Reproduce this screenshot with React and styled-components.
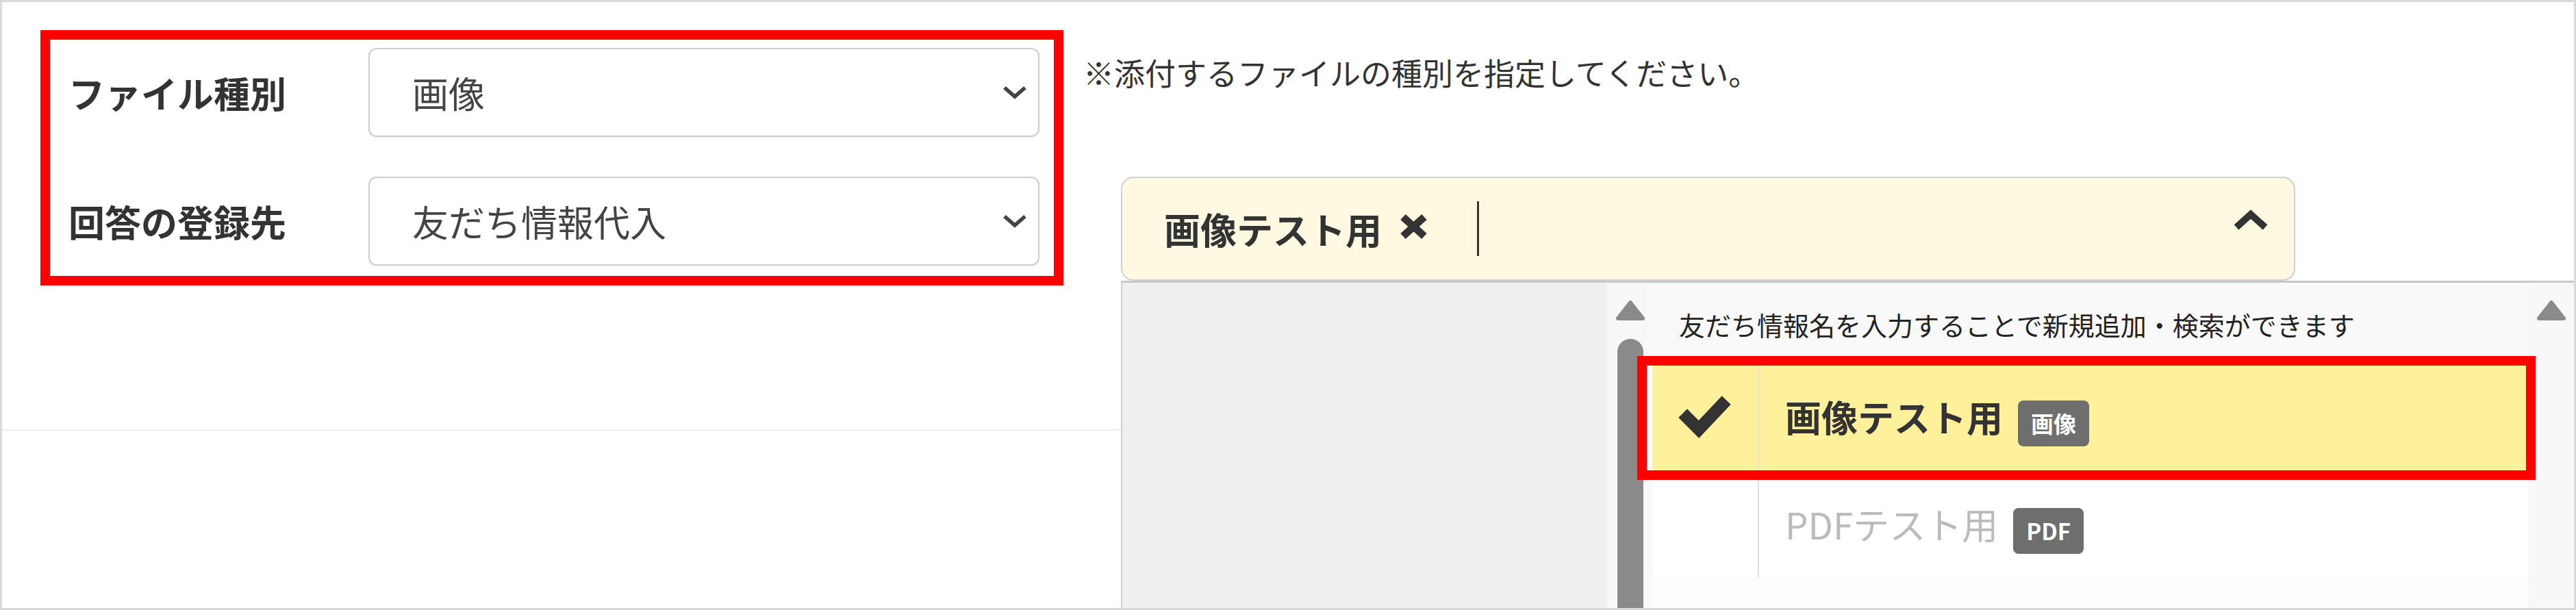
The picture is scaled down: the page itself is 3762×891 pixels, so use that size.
import styled, { createGlobalStyle } from "styled-components";

const GlobalStyle = createGlobalStyle`
  html, body {
    margin: 0;
    padding: 0;
    background: #fff;
  }
  body {
    font-family: "Noto Sans CJK JP", "Noto Sans", sans-serif;
    color: #333;
  }
  * {
    box-sizing: border-box;
  }
`;

const ChevronDown = () => (
    <svg width="36" height="20" viewBox="0 0 36 20">
        <polyline points="3,3 18,16 33,3" fill="none" stroke="#444" strokeWidth="5.5" />
    </svg>
);

const ChevronUp = () => (
    <svg width="52" height="34" viewBox="0 0 52 34">
        <polyline points="5,28 26,9 47,28" fill="none" stroke="#333" strokeWidth="10" />
    </svg>
);

const Cross = () => (
    <svg width="45" height="40" viewBox="0 0 45 40">
        <g stroke="#333" strokeWidth="11">
            <line x1="7" y1="6" x2="38" y2="34" />
            <line x1="38" y1="6" x2="7" y2="34" />
        </g>
    </svg>
);

const Check = () => (
    <svg width="78" height="63" viewBox="0 0 78 63">
        <polyline
            points="13,33 30,50 64,14"
            fill="none"
            stroke="#333"
            strokeWidth="18"
            strokeLinecap="square"
        />
    </svg>
);

const ArrowUp = () => (
    <svg width="44" height="33" viewBox="0 0 44 33">
        <path
            d="M22 5 L40 28 L4 28 Z"
            fill="#8a8a8a"
            stroke="#8a8a8a"
            strokeWidth="6"
            strokeLinejoin="round"
        />
    </svg>
);

const App = () => {
    return (
        <>
            <GlobalStyle />
            <Frame>
                <TopSection>
                    <MarkBox>
                        <FieldRow>
                            <FieldLabel>ファイル種別</FieldLabel>
                            <SelectBox>
                                <span>画像</span>
                                <ChevronDown />
                            </SelectBox>
                        </FieldRow>
                        <FieldRow>
                            <FieldLabel>回答の登録先</FieldLabel>
                            <SelectBox>
                                <span>友だち情報代入</span>
                                <ChevronDown />
                            </SelectBox>
                        </FieldRow>
                    </MarkBox>
                    <Side>
                        <Note>※添付するファイルの種別を指定してください。</Note>
                        <TagSelect>
                            <TagLabel>画像テスト用</TagLabel>
                            <RemoveButton>
                                <Cross />
                            </RemoveButton>
                            <Caret />
                            <Toggle>
                                <ChevronUp />
                            </Toggle>
                            <Dropdown>
                                <LeftPane />
                                <ScrollTrack $width={58} $pad={10} $bg="#f8f8f8">
                                    <ArrowUp />
                                    <Thumb />
                                </ScrollTrack>
                                <Content>
                                    <HelpText>
                                        友だち情報名を入力することで新規追加・検索ができます
                                    </HelpText>
                                    <OptionList>
                                        <OptionRow $selected>
                                            <CheckCell>
                                                <Check />
                                            </CheckCell>
                                            <NameCell $selected>
                                                画像テスト用
                                                <Badge>画像</Badge>
                                            </NameCell>
                                        </OptionRow>
                                        <OptionRow>
                                            <CheckCell />
                                            <NameCell>
                                                PDFテスト用
                                                <Badge>PDF</Badge>
                                            </NameCell>
                                        </OptionRow>
                                    </OptionList>
                                </Content>
                                <ScrollTrack $width={67} $pad={0} $bg="#f8f8f8">
                                    <ArrowUp />
                                </ScrollTrack>
                            </Dropdown>
                        </TagSelect>
                    </Side>
                </TopSection>
            </Frame>
        </>
    );
};

const Frame = styled.div`
    position: relative;
    width: 3762px;
    height: 891px;
    border: 3px solid #d9d9d9;
    overflow: hidden;
    background: #fff;
`;

const TopSection = styled.div`
    display: flex;
    align-items: flex-start;
    height: 626px;
    border-bottom: 2px solid #ececec;
`;

const MarkBox = styled.div`
    display: flex;
    flex-direction: column;
    row-gap: 58px;
    margin: 41px 0 0 56px;
    padding: 12px 21px 15px 27px;
    border: 14px solid #ff0000;
`;

const FieldRow = styled.div`
    display: flex;
    align-items: center;
`;

const FieldLabel = styled.div`
    flex: 0 0 438px;
    font-size: 53px;
    font-weight: 700;
    color: #333;
    white-space: nowrap;
`;

const SelectBox = styled.div`
    display: flex;
    align-items: center;
    justify-content: space-between;
    width: 980px;
    height: 130px;
    padding: 0 16px 0 62px;
    border: 2px solid #cfcfcf;
    border-radius: 12px;
    background: #fff;
    box-shadow: 0 1px 2px rgba(0, 0, 0, 0.08);
    font-size: 53px;
    color: #444;
    white-space: nowrap;
`;

const Side = styled.div`
    display: flex;
    flex-direction: column;
    flex: 1;
    padding: 76px 0 0 29px;
`;

const Note = styled.div`
    font-size: 45px;
    line-height: 54px;
    color: #333;
    white-space: nowrap;
`;

const TagSelect = styled.div`
    position: relative;
    display: flex;
    align-items: center;
    width: 1715px;
    height: 152px;
    margin: 125px 0 0 55px;
    padding: 0 37px 0 61px;
    border: 2px solid #d0d0d0;
    border-radius: 18px;
    background: #fff9e1;
`;

const TagLabel = styled.span`
    font-size: 53px;
    font-weight: 700;
    color: #333;
    white-space: nowrap;
`;

const RemoveButton = styled.span`
    display: flex;
    margin: 0 0 6px 24px;
`;

const Caret = styled.span`
    width: 3px;
    height: 80px;
    margin-left: 70px;
    background: #333;
`;

const Toggle = styled.span`
    display: flex;
    margin: 0 0 26px auto;
`;

const Dropdown = styled.div`
    position: absolute;
    top: calc(100% + 2px);
    left: -2px;
    display: flex;
    width: 2122px;
    height: 490px;
    border-top: 3px solid #c8c8c8;
    border-left: 2px solid #cfcfcf;
    background: #efefef;
`;

const LeftPane = styled.div`
    flex: 0 0 708px;
    background: #efefef;
`;

const ScrollTrack = styled.div`
    display: flex;
    flex-direction: column;
    align-items: center;
    row-gap: 25px;
    flex: 0 0 ${(p) => p.$width}px;
    padding: 24px 0 0 ${(p) => p.$pad}px;
    background: ${(p) => p.$bg};
`;

const Thumb = styled.div`
    flex: 1;
    width: 38px;
    border-radius: 19px 19px 0 0;
    background: #8a8a8a;
`;

const Content = styled.div`
    display: flex;
    flex-direction: column;
    flex: 1;
    background: #f9f9f9;
`;

const HelpText = styled.div`
    padding: 38px 0 0 47px;
    font-size: 38px;
    line-height: 46px;
    color: #222;
    white-space: nowrap;
`;

const OptionList = styled.div`
    flex: 1;
    margin: 33px 0 0 8px;
    background: #fdfdfd;
`;

const OptionRow = styled.div`
    position: relative;
    z-index: ${(p) => (p.$selected ? 1 : 0)};
    display: flex;
    height: 157px;
    background: ${(p) => (p.$selected ? "#fff09c" : "#fff")};

    &::after {
        content: "";
        display: ${(p) => (p.$selected ? "block" : "none")};
        position: absolute;
        top: -10px;
        bottom: -14px;
        left: -22px;
        right: -11px;
        border: 14px solid #ff0000;
        pointer-events: none;
    }
`;

const CheckCell = styled.div`
    display: flex;
    align-items: center;
    justify-content: center;
    flex: 0 0 156px;
    border-right: 2px solid #e0e0e0;
`;

const NameCell = styled.div`
    display: flex;
    align-items: center;
    padding-left: 38px;
    font-size: 53px;
    line-height: 1;
    font-weight: ${(p) => (p.$selected ? 700 : 400)};
    color: ${(p) => (p.$selected ? "#333" : "#bbb")};
    white-space: nowrap;
`;

const Badge = styled.span`
    display: inline-flex;
    align-items: center;
    height: 67px;
    margin: 20px 0 0 22px;
    padding: 0 19px;
    border-radius: 8px;
    background: #6e6e6e;
    color: #fff;
    font-size: 33px;
    font-weight: 700;
`;

export default App;
